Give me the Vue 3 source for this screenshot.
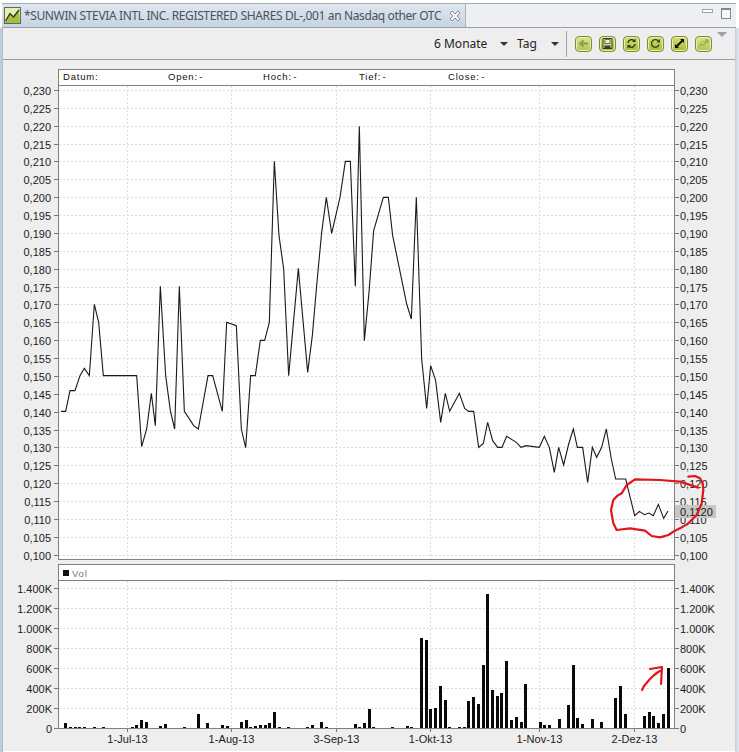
<template>
  <div class="window">
    <div class="tabbar">
      <div class="tab">
        <svg class="tab-icon" width="17" height="17" viewBox="0 0 17 17">
          <rect x="0.5" y="0.5" width="16" height="16" fill="#e8eeb0" stroke="#5d6670" />
          <path d="M1 15 L6 7 L9 10 L15 2 L16 16 L1 16 Z" fill="#a9bd3a" />
          <path d="M1.5 14 L6 6.5 L9.5 10 L15 3" fill="none" stroke="#2b3320" stroke-width="1.3" />
        </svg>
        <span class="tab-title">*SUNWIN STEVIA INTL INC. REGISTERED SHARES DL-,001 an Nasdaq other OTC</span>
        <svg class="tab-close" width="12" height="12" viewBox="0 0 12 12">
          <path d="M1 3 L3 1 L6 4 L9 1 L11 3 L8 6 L11 9 L9 11 L6 8 L3 11 L1 9 L4 6 Z" fill="#f7f7f7" stroke="#8c8c8c" />
        </svg>
      </div>
      <div class="tab-rest">
        <span class="win-min"></span>
        <span class="win-max"></span>
      </div>
    </div>

    <div class="toolbar">
      <div class="combo combo-range"><span>6 Monate</span><i class="caret"></i></div>
      <div class="combo combo-unit"><span>Tag</span><i class="caret"></i></div>
      <div class="sep"></div>
      <div class="tools">
        <button v-for="t in tools" :key="t.name" class="tool" :class="{ faded: t.faded }" :title="t.name">
          <svg width="11" height="11" viewBox="0 0 11 11" v-html="t.glyph"></svg>
        </button>
      </div>
      <i class="view-menu"></i>
    </div>

    <div class="charts">
      <!-- price panel, drawn in page coordinates -->
      <svg class="panel" width="730" height="504" viewBox="3 61 730 504">
        <rect x="58.5" y="70.5" width="616" height="490" fill="#fff" stroke="#808080" />
        <line x1="58" x2="675" y1="86.5" y2="86.5" stroke="#808080" />
        <text v-for="l in legend" :key="l.text" :x="l.x" y="81" class="legend">{{ l.text }}</text>

        <line v-for="x in gridX" :key="x" :x1="x" :x2="x" y1="87" y2="560" class="grid" />
        <g v-for="t in priceTicks" :key="t.label">
          <line x1="59" x2="674" :y1="t.y" :y2="t.y" class="grid" />
          <line x1="54" x2="58" :y1="t.y" :y2="t.y" class="tick" />
          <line x1="675" x2="679" :y1="t.y" :y2="t.y" class="tick" />
          <text x="51" :y="t.y + 4" text-anchor="end" class="axis">{{ t.label }}</text>
          <text x="680" :y="t.y + 4" class="axis">{{ t.label }}</text>
        </g>

        <polyline :points="pricePoints" fill="none" stroke="#1a1a1a" stroke-width="1.1" />

        <rect x="675" y="506" width="41" height="13" fill="#c6c6c6" />
        <text x="680" y="517" class="axis">0,1120</text>
      </svg>

      <!-- volume panel -->
      <svg class="panel" width="730" height="187" viewBox="3 565 730 187">
        <rect x="58.5" y="565.5" width="616" height="164" fill="#fff" stroke="#808080" />
        <line x1="58" x2="675" y1="581.5" y2="581.5" stroke="#808080" />
        <rect x="63" y="571" width="6" height="6" fill="#111" />
        <text x="72" y="578" class="legend vol">Vol</text>

        <line v-for="x in gridX" :key="x" :x1="x" :x2="x" y1="582" y2="729" class="grid" />
        <g v-for="t in volTicks" :key="t.label">
          <line v-if="t.y < 729" x1="59" x2="674" :y1="t.y" :y2="t.y" class="grid" />
          <line x1="54" x2="58" :y1="t.y" :y2="t.y" class="tick" />
          <line x1="675" x2="679" :y1="t.y" :y2="t.y" class="tick" />
          <text x="52" :y="t.y + 4" text-anchor="end" class="axis">{{ t.label }}</text>
          <text x="680" :y="t.y + 4" class="axis">{{ t.label }}</text>
        </g>

        <rect v-for="b in bars" :key="b.x" :x="b.x" :y="b.y" width="3" :height="729 - b.y" fill="#0a0a0a" />

        <g v-for="d in dates" :key="d.label">
          <line :x1="d.x" :x2="d.x" y1="730" y2="733" class="tick" />
          <text :x="d.x" y="744" text-anchor="middle" class="axis date">{{ d.label }}</text>
        </g>
      </svg>

      <!-- hand drawn marks on top of the charts -->
      <svg class="scribble" width="739" height="752" viewBox="0 0 739 752">
        <polyline :points="circlePoints" fill="none" stroke="#e2141d" stroke-width="2.2" stroke-linecap="round" stroke-linejoin="round" />
        <path d="M642 690 L644 686 L650 679 Q656 673 660 671 M650 669 L662 667 L661 684" fill="none" stroke="#e2141d" stroke-width="2.2" stroke-linecap="round" stroke-linejoin="round" />
      </svg>
    </div>
  </div>
</template>

<script setup>
// traced from a 3x view, so everything is divided by 3 below
const priceLeft = [
  [33, 907], [47, 907], [60, 845], [75, 845], [90, 800], [103, 778], [118, 800], [133, 586], [146, 640], [160, 800],
  [260, 800], [275, 1013], [290, 960], [304, 853], [316, 950], [331, 532], [347, 800], [361, 905], [374, 960],
  [388, 532], [403, 907], [417, 928], [431, 950], [445, 960], [474, 800], [488, 800], [517, 907], [530, 640],
  [559, 650], [574, 960], [587, 1016], [602, 800], [616, 800], [631, 694], [644, 694], [658, 640], [673, 157],
  [687, 380], [701, 480], [716, 800], [745, 478], [773, 790], [787, 680], [800, 530], [815, 370], [829, 265], [845, 373],
]
const priceMid = [
  [30, 265], [46, 157], [61, 157], [76, 532], [88, 52], [103, 695], [117, 550], [131, 365], [160, 265], [175, 265],
  [188, 380], [230, 585], [244, 630], [259, 265], [275, 750], [290, 898], [302, 770], [317, 815], [332, 940],
  [346, 853], [359, 907], [388, 853], [404, 898], [416, 907], [431, 907], [446, 1015], [460, 1003], [473, 940],
  [488, 995], [503, 1015], [516, 1015], [530, 982], [559, 1000], [573, 1015], [588, 1010], [628, 1015], [643, 982],
  [658, 1015], [673, 1090], [686, 1015], [701, 1068], [716, 1005], [730, 960], [742, 1015], [758, 1015], [773, 1120],
  [787, 1015], [800, 1045], [815, 1015], [829, 960], [844, 1050], [857, 1110], [887, 1110],
]
const priceEnd = [
  [224, 230], [238, 217], [253, 227], [267, 222], [280, 230], [295, 196], [311, 238], [324, 216],
]

const pricePoints = [
  ...priceLeft.map(([x, y]) => [50 + x / 3, 110 + y / 3]),
  ...priceMid.map(([x, y]) => [330 + x / 3, 110 + y / 3]),
  ...priceEnd.map(([x, y]) => [560 + x / 3, 440 + y / 3]),
].map(p => p.join(',')).join(' ')

const circle = [
  [385, 110], [405, 108], [420, 115], [428, 130], [430, 150], [425, 190], [410, 225], [385, 250], [360, 265], [345, 272],
  [325, 285], [300, 292], [275, 288], [255, 272], [210, 265], [170, 270], [160, 250], [153, 210], [160, 180], [172, 167],
  [185, 160], [200, 135], [225, 118], [300, 120], [360, 125], [415, 143],
]
const circlePoints = circle.map(([x, y]) => [560 + x / 3, 440 + y / 3].join(',')).join(' ')

const volLeft = [
  [197, 491], [211, 505], [225, 505], [239, 505], [253, 505], [282, 505], [310, 505], [396, 503], [410, 498], [424, 482],
  [438, 490], [482, 502], [496, 495], [525, 506], [553, 504], [595, 465], [623, 491], [666, 498], [681, 501], [724, 488],
  [738, 484], [752, 505], [767, 501], [781, 498], [795, 498], [809, 492], [823, 459], [838, 505], [866, 505], [923, 503],
  [937, 497], [965, 490], [980, 505], [1065, 496], [1079, 503], [1093, 492], [1107, 450],
]
const volRight = [
  [10, 505], [68, 505], [111, 500], [125, 503], [154, 236], [168, 243], [182, 450], [196, 447], [211, 381], [225, 424],
  [239, 505], [268, 504], [282, 504], [296, 425], [310, 414], [324, 434], [339, 317], [353, 106], [367, 394], [381, 412],
  [395, 402], [410, 307], [424, 484], [438, 474], [453, 488], [467, 376], [510, 490], [524, 498], [538, 498], [567, 480],
  [581, 506], [595, 438], [609, 318], [623, 478], [637, 495], [652, 506], [666, 481], [694, 488], [737, 417], [751, 381],
  [766, 465], [794, 506], [808, 506], [823, 471], [837, 460], [851, 470], [865, 492], [880, 466], [894, 326],
]
const bars = [
  ...volLeft.map(([x, y]) => ({ x: Math.round(x / 3 - 1.5), y: Math.round(560 + y / 3) })),
  ...volRight.map(([x, y]) => ({ x: Math.round(370 + x / 3 - 1.5), y: Math.round(560 + y / 3) })),
]

const gridX = [127.5, 231.5, 336.5, 430.5, 539.5, 634.5]

const dates = [
  { label: '1-Jul-13', x: 127.5 },
  { label: '1-Aug-13', x: 231.5 },
  { label: '3-Sep-13', x: 336.5 },
  { label: '1-Okt-13', x: 430.5 },
  { label: '1-Nov-13', x: 539.5 },
  { label: '2-Dez-13', x: 634.5 },
]

const legend = [
  { text: 'Datum:', x: 63 },
  { text: 'Open: -', x: 168 },
  { text: 'Hoch: -', x: 263 },
  { text: 'Tief: -', x: 359 },
  { text: 'Close: -', x: 448 },
]

// 0,230 down to 0,100 in steps of 0,005
const priceTicks = Array.from({ length: 27 }, (_, i) => ({
  label: (0.23 - i * 0.005).toFixed(3).replace('.', ','),
  y: Math.round(91 + i * 17.87) + 0.5,
}))

const volTicks = [1400, 1200, 1000, 800, 600, 400, 200, 0].map((v, i) => ({
  label: v === 0 ? '0' : v.toLocaleString('de-DE') + 'K',
  y: Math.round(588.5 + i * 20.14) + 0.5,
}))

const tools = [
  { name: 'Zurück', faded: true, glyph: '<path d="M10 5.5H4M5.5 2.5L2 5.5L5.5 8.5" fill="none" stroke="#8b9c4d" stroke-width="1.8"/>' },
  { name: 'Speichern', glyph: '<path d="M1 .5h9v10h-9z" fill="#cfd89a" stroke="#39402a"/><path d="M3 1.5h5v4H3z" fill="#eef3c8" stroke="#39402a" stroke-width=".7"/><path d="M2.5 7.5h6v3h-6z" fill="#39402a"/>' },
  { name: 'Aktualisieren', glyph: '<path d="M2 5a3.5 3.5 0 0 1 6-2.3M9 6a3.5 3.5 0 0 1-6 2.3" fill="none" stroke="#2b3320" stroke-width="1.4"/><path d="M9.5 .5v3.5H6zM1.5 10.5V7H5z" fill="#2b3320"/>' },
  { name: 'Neu laden', glyph: '<path d="M9 6.5A3.8 3.8 0 1 1 8 2.8" fill="none" stroke="#39402a" stroke-width="1.3"/><path d="M10 .8v3.7H6.5z" fill="#39402a"/>' },
  { name: 'Maximieren', glyph: '<path d="M2.5 8.5L8.5 2.5" stroke="#0c0c0c" stroke-width="1.8"/><path d="M6 1h4v4zM1 6v4h4z" fill="#0c0c0c"/>' },
  { name: 'Chart', faded: true, glyph: '<path d="M1 9L4 6L6 7L10 2M10 2v3M10 2H7" fill="none" stroke="#a3b452" stroke-width="1.4"/><path d="M2 6L5 3L7 4L9 2" fill="none" stroke="#a3b452"/>' },
]
</script>

<style>
html, body {
  margin: 0;
  background: #fff;
}
</style>

<style scoped>
.window {
  position: relative;
  width: 739px;
  height: 752px;
  overflow: hidden;
  box-sizing: border-box;
  padding-top: 3px;
  background: #fff;
  font-family: "Noto Sans", "Open Sans", sans-serif;
  color: #333;
}

.tabbar {
  display: flex;
  height: 23px;
  margin: 0 3px 0 2px;
  border-top: 1px solid #a3acb6;
  border-bottom: 1px solid #9aa3ad;
}

.tab {
  display: flex;
  align-items: center;
  width: 464px;
  padding-left: 2px;
  box-sizing: border-box;
  background: linear-gradient(#dfe7ef, #c5d3e2);
  border-right: 1px solid #a9b4bf;
  white-space: nowrap;
}

.tab-icon {
  flex: none;
  margin-right: 3px;
}

.tab-title {
  font-size: 12px;
  color: #4a525b;
  width: 421px;
  flex: none;
  letter-spacing: -0.37px;
}

.tab-close {
  flex: none;
  margin-left: 4px;
}

.tab-rest {
  flex: 1;
  display: flex;
  justify-content: flex-end;
  align-items: flex-start;
  gap: 8px;
  padding: 4px 5px 0 0;
  background: #eeeff0;
}

.win-min {
  width: 9px;
  height: 2px;
  margin-top: 1px;
  border: 1px solid #9ba3ac;
  background: #fff;
}

.win-max {
  width: 8px;
  height: 8px;
  border: 1px solid #7f8791;
  border-top-width: 2px;
  background: #f7f7f7;
}

.toolbar,
.charts {
  margin-left: 3px;
  margin-right: 4px;
  background: #eeeeee;
}

.toolbar {
  display: flex;
  align-items: center;
  height: 32px;
  box-sizing: border-box;
  border-bottom: 1px solid #9b9b9b;
  position: relative;
  padding-left: 431px;
  font-size: 12px;
  color: #222;
}

.combo {
  display: flex;
  align-items: center;
}

.combo-range {
  width: 83px;
}

.combo-unit {
  width: 49px;
}

.combo-range span {
  width: 66px;
}

.combo-unit span {
  width: 34px;
}

.caret {
  width: 0;
  height: 0;
  border-left: 4px solid transparent;
  border-right: 4px solid transparent;
  border-top: 4px solid #333;
}

.sep {
  width: 1px;
  height: 26px;
  background: #a0a0a0;
  flex: none;
}

.tools {
  display: flex;
  gap: 7px;
  margin-left: 8px;
}

.tool {
  width: 17px;
  height: 16px;
  padding: 0;
  display: flex;
  align-items: center;
  justify-content: center;
  border: 1px solid #7c8c3a;
  border-radius: 4px;
  background: linear-gradient(#d6e06e, #a4bb35);
  box-shadow: inset 0 0 0 1px #e7eeae;
}

.tool.faded {
  background: linear-gradient(#dbe38c, #b3c459);
}

.view-menu {
  position: absolute;
  right: 8px;
  top: 4px;
  width: 10px;
  height: 6px;
}

.view-menu::before {
  content: "";
  position: absolute;
  left: 0;
  top: 0;
  border-left: 5px solid transparent;
  border-right: 5px solid transparent;
  border-top: 5px solid #9aa3ad;
}

.charts {
  height: 691px;
  overflow: hidden;
}

.panel {
  display: block;
}

.scribble {
  position: absolute;
  left: 0;
  top: 0;
  pointer-events: none;
}

.window::before,
.window::after {
  content: "";
  position: absolute;
  top: 28px;
  bottom: 0;
}

.window::before {
  left: 0;
  width: 3px;
  background: linear-gradient(90deg, #c9d3de, #aebbc9);
}

.window::after {
  right: 0;
  width: 4px;
  background: linear-gradient(90deg, #c3cdd8, #e6ebf0);
}

.grid {
  stroke: #dcdcdc;
  stroke-dasharray: 2 2;
}

.tick {
  stroke: #777;
}

.axis {
  font-family: "Liberation Sans", Arial, sans-serif;
  font-size: 11px;
  fill: #1c1c1c;
}

.date {
  letter-spacing: 0.1px;
}

.legend {
  font-family: "Liberation Sans", Arial, sans-serif;
  font-size: 9.5px;
  letter-spacing: 0.8px;
  word-spacing: -2px;
  fill: #111;
}

.vol {
  fill: #777;
}
</style>
